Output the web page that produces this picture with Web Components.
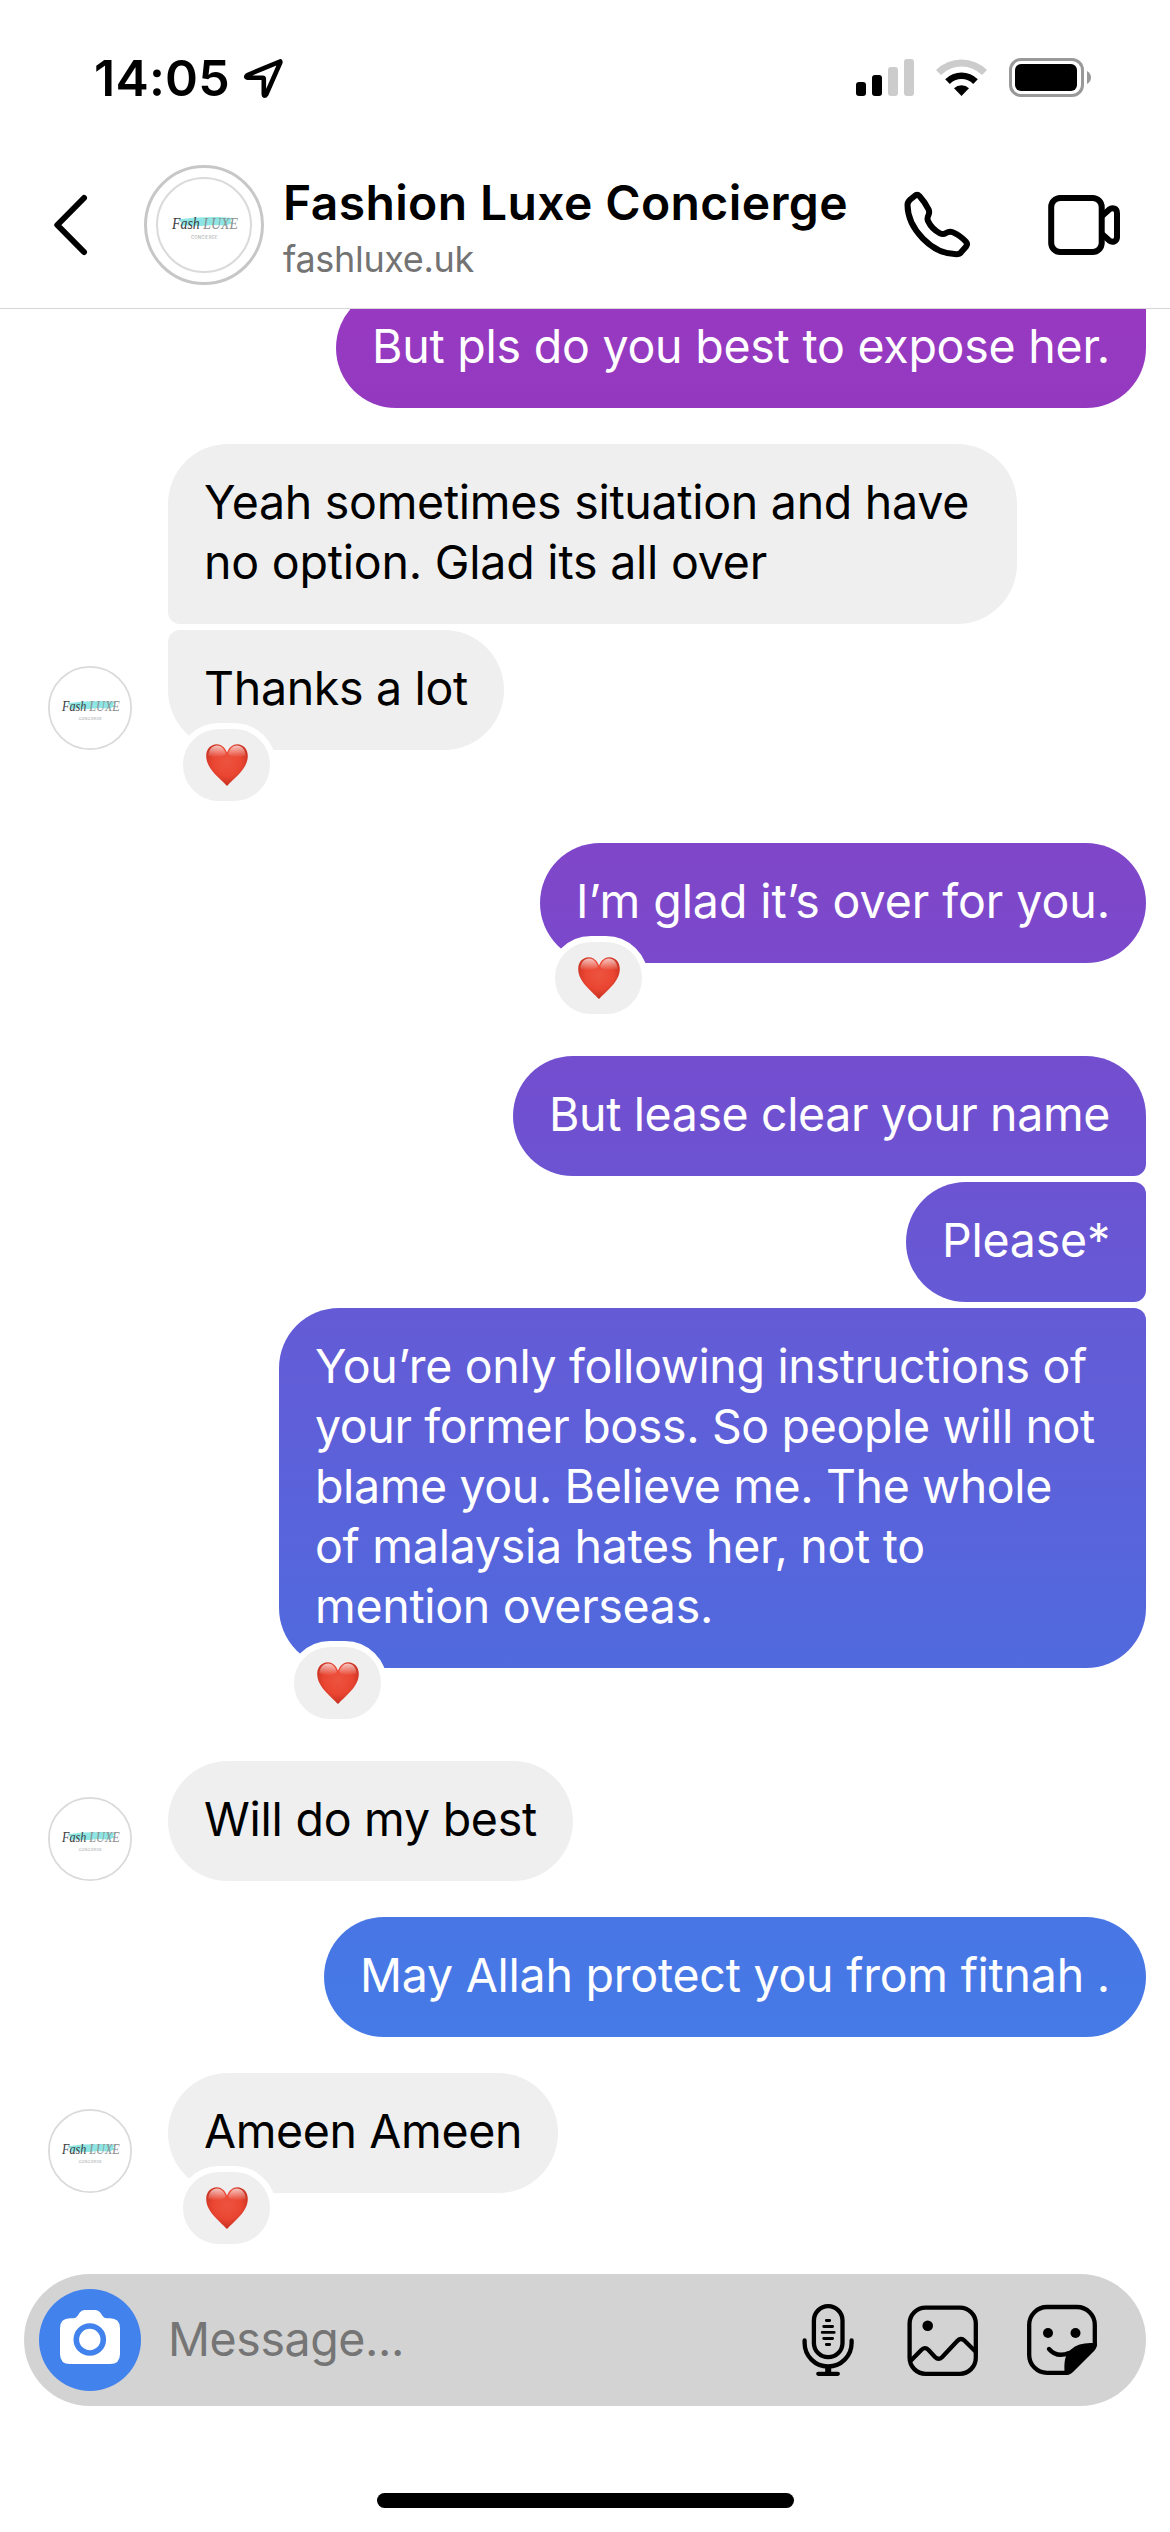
<!DOCTYPE html>
<html lang="en">
<head>
<meta charset="utf-8">
<title>Fashion Luxe Concierge</title>
<style>
html,body{margin:0;padding:0;background:#fff}
body{width:1170px;height:2532px;overflow:hidden;font-family:Inter,"Liberation Sans",sans-serif;color:#000}
</style>
</head>
<body>
<chat-screen>
  <status-bar slot="top"><fit-text width="136">14:05</fit-text></status-bar>
  <chat-header slot="top">
    <fit-text slot="name" width="565">Fashion Luxe Concierge</fit-text>
    <fit-text slot="user" width="191">fashluxe.uk</fit-text>
  </chat-header>
  <chat-message out join-top><fit-text width="738">But pls do you best to expose her.</fit-text></chat-message>
  <chat-message join-bottom><fit-text width="765">Yeah sometimes situation and have</fit-text><fit-text width="563">no option. Glad its all over</fit-text></chat-message>
  <chat-message join-top avatar heart><fit-text width="264">Thanks a lot</fit-text></chat-message>
  <chat-message out heart><fit-text width="534">I’m glad it’s over for you.</fit-text></chat-message>
  <chat-message out join-bottom><fit-text width="561">But lease clear your name</fit-text></chat-message>
  <chat-message out join-top join-bottom><fit-text width="168">Please*</fit-text></chat-message>
  <chat-message out join-top heart><fit-text width="772">You’re only following instructions of</fit-text><fit-text width="780">your former boss. So people will not</fit-text><fit-text width="737">blame you. Believe me. The whole</fit-text><fit-text width="610">of malaysia hates her, not to</fit-text><fit-text width="398">mention overseas.</fit-text></chat-message>
  <chat-message avatar><fit-text width="333">Will do my best</fit-text></chat-message>
  <chat-message out><fit-text width="750">May Allah protect you from fitnah .</fit-text></chat-message>
  <chat-message avatar heart><fit-text width="318">Ameen Ameen</fit-text></chat-message>
  <chat-composer slot="bottom"><fit-text width="236">Message...</fit-text></chat-composer>
  <home-indicator slot="bottom"></home-indicator>
</chat-screen>

<script>
function define(name, html, setup) {
  const template = document.createElement('template');
  template.innerHTML = html.trim();
  customElements.define(name, class extends HTMLElement {
    constructor() {
      super();
      this.attachShadow({ mode: 'open' }).append(template.content.cloneNode(true));
    }
    connectedCallback() { if (setup) setup(this, this.shadowRoot); }
  });
}

define('brand-avatar', `
<style>
:host{display:block;flex:none;width:var(--size,84px);height:var(--size,84px)}
svg{display:block;width:100%;height:100%}
text{font-family:"Liberation Serif",serif;font-style:italic}
.sub{font-family:Inter,sans-serif;font-style:normal}
</style>
<svg viewBox="0 0 96 96">
  <circle cx="48" cy="48" r="47" fill="#fff" stroke="#dadada" stroke-width="2"/>
  <path d="M22 42.5 L40 40.5 L62 40 L77 41 L74 44 L77 46 L70 48.5 L57 48 L46 49 L30 48.5 L24 49 L26 46Z" fill="#8ee6e4"/>
  <text x="16" y="51.5" font-size="17" fill="#3c4040" textLength="66" lengthAdjust="spacingAndGlyphs">Fash <tspan fill="#8b8f90">LUXE</tspan></text>
  <text class="sub" x="35" y="61.5" font-size="4.2" fill="#a2a2a2" textLength="26.5">CONCIERGE</text>
</svg>`);

define('heart-reaction', `
<style>
:host{display:flex;box-sizing:border-box;width:99px;height:84px;border:6px solid #fff;border-radius:42px;background:#efefef;align-items:center;justify-content:center}
svg{display:block;width:44px;height:44px}
</style>
<svg viewBox="0 0 44 44">
  <defs>
    <radialGradient id="b" cx=".5" cy=".42" r=".62"><stop offset="0" stop-color="#ec5440"/><stop offset=".55" stop-color="#ea4632"/><stop offset=".85" stop-color="#cf3524"/><stop offset="1" stop-color="#9f2015"/></radialGradient>
    <linearGradient id="s" x1="0" y1="0" x2="0" y2="1"><stop offset="0" stop-color="#fff" stop-opacity=".7"/><stop offset="1" stop-color="#fff" stop-opacity="0"/></linearGradient>
  </defs>
  <path d="M22 9.5C20 4.2 16 1.2 11.8 1.2C5.6 1.2 1.2 6.2 1.2 13C1.2 25.5 14 34.5 22 43C30 34.5 42.8 25.5 42.8 13C42.8 6.2 38.4 1.2 32.2 1.2C28 1.2 24 4.2 22 9.5Z" fill="url(#b)"/>
  <path d="M3.4 12.5C4 6 7.5 2.6 12 2.6C16 2.6 19.5 5.8 20.8 11C16 15 8 15 3.4 12.5Z M40.6 12.5C40 6 36.5 2.6 32 2.6C28 2.6 24.5 5.8 23.2 11C28 15 36 15 40.6 12.5Z" fill="url(#s)"/>
</svg>`);

define('status-bar', `
<style>
:host{display:flex;box-sizing:border-box;height:142px;padding:13px 79px 0 94px;align-items:center;font-size:50px;font-weight:600;line-height:60px}
svg{display:block;flex:none}
.row{display:flex;width:100%;align-items:center;height:60px}
.arrow{margin-left:11px}
.signals{margin-left:auto}
</style>
<div class="row"><slot></slot>
<svg class="arrow" width="46" height="60" viewBox="241 48 46 60"><path d="M279.8 61.6 L247.5 75 Q244.8 77.3 247.8 77.8 H262.8 Q263.8 77.8 263.8 79 V94 Q264.3 97 266.3 94.3 L280.3 62.5 Q280.6 61.2 279.8 61.6Z" fill="none" stroke="#000" stroke-width="4.6" stroke-linejoin="round"/></svg>
<svg class="signals" width="238" height="60" viewBox="853 48 238 60">
  <rect x="856" y="82" width="10" height="14" rx="3"/><rect x="872" y="75" width="10" height="21" rx="3"/>
  <g fill="#ccc"><rect x="888" y="67" width="10" height="29" rx="3"/><rect x="904" y="59" width="10" height="37" rx="3"/></g>
  <path d="M936 70 A36 36 0 0 1 987 70 L982 75 A28.8 28.8 0 0 0 941 75Z" fill="#ccc"/>
  <path d="M945.2 79.3 A23 23 0 0 1 977.8 79.3 L973.2 83.9 A16.5 16.5 0 0 0 949.8 83.9Z"/>
  <path d="M954 88.2 A11 11 0 0 1 969 88.2 L961.5 96Z"/>
  <rect x="1010.5" y="59.5" width="72" height="36" rx="10.5" fill="none" stroke="#999" stroke-width="3"/>
  <rect x="1015" y="64" width="62" height="27" rx="6"/>
  <path d="M1087 71 Q1091 73.5 1091 77.5 T1087 84Z" fill="#999"/>
</svg></div>`);

define('chat-header', `
<style>
:host{display:flex;box-sizing:border-box;height:167px;border-bottom:1px solid #d6d6d6;align-items:center;padding:0 47px 0 50px;background:#fff}
svg{display:block;flex:none}
.ring{display:flex;box-sizing:border-box;width:120px;height:120px;border:3px solid #c7c7c7;border-radius:50%;align-items:center;justify-content:center;margin:0 19px 0 52px;flex:none}
.ring brand-avatar{--size:96px}
.names{display:flex;flex-direction:column;gap:5px;padding-top:4px}
.name{font-size:48px;font-weight:600;line-height:58px}
.user{font-size:36px;line-height:44px;color:#737373}
.video{margin-left:70px}.phone{margin-left:auto}
path,rect{fill:none;stroke:#000;stroke-width:6;stroke-linejoin:round;stroke-linecap:round}
</style>
<svg width="42" height="80" viewBox="50 185 42 80"><path d="M84 198 L57.3 225 L84 252"/></svg>
<div class="ring"><brand-avatar></brand-avatar></div>
<div class="names"><div class="name"><slot name="name"></slot></div><div class="user"><slot name="user"></slot></div></div>
<svg class="phone" width="75" height="80" viewBox="10 5 75 80"><path d="M17.5 25C17.5 22.5 18.3 21.3 20 19.8L24.3 16.2C26.2 14.5 28 14.5 29.6 16.2C33 20 36.5 25 38.6 29.5C39.6 31.8 39.4 33 38.5 35C37.3 37.4 37 38.8 38 41C40.5 46.3 44.5 50.5 50 53.3C52.3 54.5 54 54.3 56 53C58.3 51.6 60.3 51.3 62.8 52.2C68 54.2 72 57.5 75.8 61.5C77.4 63.3 77.3 65 75.9 66.8L71.5 71.8C70.2 73.6 69 74.3 66.5 74.3C42 74 17.8 49 17.5 25Z"/></svg>
<svg class="video" width="78" height="80" viewBox="155 5 78 80"><rect x="161.2" y="18" width="50.5" height="54" rx="9"/><path d="M212.5 35.5L219 29.7C222.5 27 227 28.5 227 33V57C227 61.5 222.5 63 219 60.3L212.5 54.5"/></svg>`);

define('chat-message', `
<style>
:host{display:flex;align-items:flex-end;margin-top:36px;padding:0 24px 0 168px}
:host([join-top]){margin-top:6px}
:host([out]){justify-content:flex-end}
:host([heart]){padding-bottom:57px}
.bubble{position:relative;box-sizing:border-box;padding:28px 36px 32px;border-radius:60px;background:#efefef;font-size:46.5px;line-height:60px}
:host([out]) .bubble{color:#fff;background:linear-gradient(180deg,#983ac1 300px,#9339c0 408px,#8046c9 843px,#7b49cc 963px,#734ecf 1056px,#6c53d1 1176px,#655ad6 1302px,#506ade 1668px,#4876e4 1917px,#457ae7 2037px,#4282ec 2300px) fixed}
:host([join-top]:not([out])) .bubble{border-top-left-radius:12px}
:host([join-bottom]:not([out])) .bubble{border-bottom-left-radius:12px}
:host([join-top][out]) .bubble{border-top-right-radius:12px}
:host([join-bottom][out]) .bubble{border-bottom-right-radius:12px}
brand-avatar{margin:0 36px 0 -120px;display:none}
:host([avatar]) brand-avatar{display:block}
heart-reaction{position:absolute;left:9px;bottom:-57px;display:none}
:host([heart]) heart-reaction{display:flex}
</style>
<brand-avatar></brand-avatar>
<div class="bubble"><slot></slot><heart-reaction></heart-reaction></div>`,
(el, root) => {
  const lines = el.querySelectorAll('fit-text').length;
  if (lines > 1) root.querySelector('.bubble').style.width = (lines === 2 ? 849 : 867) + 'px';
});

define('chat-composer', `
<style>
:host{display:flex;box-sizing:border-box;height:132px;margin:0 24px;padding:0 46px 0 15px;border-radius:66px;background:#d3d3d3;align-items:center;flex:none}
svg{display:block;flex:none}
.text{margin-left:27px;font-size:46.5px;line-height:60px;color:#757575;padding-bottom:2px}
.mic{margin-left:auto}.pic{margin-left:49px}.sticker{margin-left:44px}
.l{fill:none;stroke:#000;stroke-width:4.3;stroke-linejoin:round;stroke-linecap:round}
</style>
<svg width="102" height="102" viewBox="39 2289 102 102"><circle cx="90" cy="2340" r="51" fill="#4282ec"/>
<path d="M70 2318.3H73.5Q75.7 2318.3 77.2 2316.2L79.8 2312.5Q81.5 2310 84.5 2310H95.5Q98.5 2310 100.2 2312.5L102.8 2316.2Q104.3 2318.3 106.5 2318.3H110Q120 2318.3 120 2328.3V2354Q120 2364 110 2364H70Q60 2364 60 2354V2328.3Q60 2318.3 70 2318.3Z" fill="#fff"/><circle cx="89.8" cy="2339.5" r="13.5" fill="none" stroke="#4282ec" stroke-width="5.6"/></svg>
<div class="text"><slot></slot></div>
<svg class="mic" width="56" height="80" viewBox="50 40 56 80"><rect class="l" x="63.9" y="46.2" width="28.6" height="51" rx="14.3"/><path class="l" d="M54.6 80.5V83A23.5 23.5 0 0 0 101.6 83V80.5M68.3 113.8H87.8"/><path d="M75.2 106H81.2V113H75.2Z"/><path class="l" style="stroke-width:2.8" d="M76.3 60.5H79.7M73.7 66.5H82.6M72.2 72.4H84.2M73.7 78.5H82.6M76.3 84.5H79.7"/></svg>
<svg class="pic" width="76" height="80" viewBox="155 40 76 80"><rect class="l" x="159.6" y="47.6" width="66.2" height="66.2" rx="16"/><circle cx="177.7" cy="65.7" r="5.3"/><path class="l" d="M161 100.5L171.3 90Q174.8 86.3 178.3 89.8L185 97Q188.5 100.6 192 97.2L207 81.2Q210.8 77 214.6 80.8L225.5 91.5"/></svg>
<svg class="sticker" width="75" height="80" viewBox="275 40 75 80"><path class="l" d="M317 112.8H297A17.8 17.8 0 0 1 279.2 95V64.8A17.8 17.8 0 0 1 297 47H327A17.8 17.8 0 0 1 344.8 64.8V85"/><circle cx="298" cy="73" r="5"/><circle cx="325.5" cy="73" r="5"/><path class="l" d="M299 89C304.5 95.5 311.5 96 319 93"/><path d="M347 83C338 82.8 329 83 323 88C315 92.5 313.5 101 314.8 114.9C318.5 115.2 320.6 114.4 323 112L344.3 90.7C346.4 88.5 347 86.5 347 83Z"/></svg>`);

define('home-indicator', `
<style>:host{display:flex;box-sizing:border-box;height:126px;padding-bottom:24px;align-items:flex-end;justify-content:center;flex:none}div{width:417px;height:15px;border-radius:8px;background:#000}</style><div></div>`);

define('chat-screen', `
<style>
:host{display:flex;flex-direction:column;width:1170px;height:2532px;background:#fff;overflow:hidden}
.list{flex:1;min-height:0;overflow:hidden;display:flex;flex-direction:column}
.inner{display:flow-root;margin-top:-27px}
</style>
<slot name="top"></slot><div class="list"><div class="inner"><slot></slot></div></div><slot name="bottom"></slot>`);

/* One line of text, tracked so that its advance equals the given width.
   Defined last: it measures with the font its container hands down. */
define('fit-text', `
<style>:host{display:block}span{display:block;width:max-content;white-space:pre}</style><span><slot></slot></span>`,
(el, root) => {
  const span = root.querySelector('span');
  const target = +el.getAttribute('width');
  span.style.letterSpacing = '0.001px';
  const natural = span.getBoundingClientRect().width;
  span.style.letterSpacing = ((target - natural) / el.textContent.length) + 'px';
  el.style.width = target + 'px';
});
</script>
</body>
</html>
